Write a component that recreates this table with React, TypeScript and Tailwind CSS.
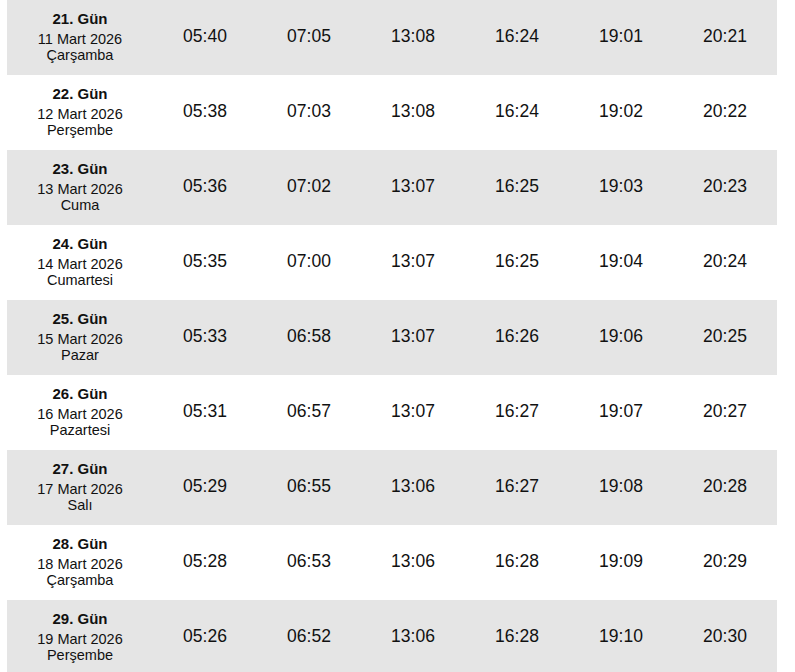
import React from "react";

const rows = [
  ["21", "11 Mart 2026", "Çarşamba", "05:40", "07:05", "13:08", "16:24", "19:01", "20:21"],
  ["22", "12 Mart 2026", "Perşembe", "05:38", "07:03", "13:08", "16:24", "19:02", "20:22"],
  ["23", "13 Mart 2026", "Cuma", "05:36", "07:02", "13:07", "16:25", "19:03", "20:23"],
  ["24", "14 Mart 2026", "Cumartesi", "05:35", "07:00", "13:07", "16:25", "19:04", "20:24"],
  ["25", "15 Mart 2026", "Pazar", "05:33", "06:58", "13:07", "16:26", "19:06", "20:25"],
  ["26", "16 Mart 2026", "Pazartesi", "05:31", "06:57", "13:07", "16:27", "19:07", "20:27"],
  ["27", "17 Mart 2026", "Salı", "05:29", "06:55", "13:06", "16:27", "19:08", "20:28"],
  ["28", "18 Mart 2026", "Çarşamba", "05:28", "06:53", "13:06", "16:28", "19:09", "20:29"],
  ["29", "19 Mart 2026", "Perşembe", "05:26", "06:52", "13:06", "16:28", "19:10", "20:30"],
];

export default function App() {
  return (
    <div
      className="h-[672px] overflow-hidden bg-white pl-[7px] text-[#111]"
      style={{ fontFamily: '"Liberation Sans", Arial, sans-serif' }}
    >
      <div className="flex w-[770px] flex-col">
        {rows.map((r, i) => (
          <div
            key={r[0]}
            className={`grid h-[75px] shrink-0 grid-cols-[146px_repeat(6,104px)] items-center ${
              i % 2 === 0 ? "bg-[#e5e5e5]" : "bg-white"
            }`}
          >
            <div className="flex flex-col items-center pb-[2px] text-center">
              <div className="text-[15px] font-bold leading-[18px]">{r[0]}. Gün</div>
              <div className="mt-[4px] text-[14.5px] leading-[15.5px]">
                <div>{r[1]}</div>
                <div>{r[2]}</div>
              </div>
            </div>
            {r.slice(3).map((t, j) => (
              <div key={j} className="pb-[3px] text-center text-[17.5px] leading-[20px]">
                {t}
              </div>
            ))}
          </div>
        ))}
      </div>
    </div>
  );
}
